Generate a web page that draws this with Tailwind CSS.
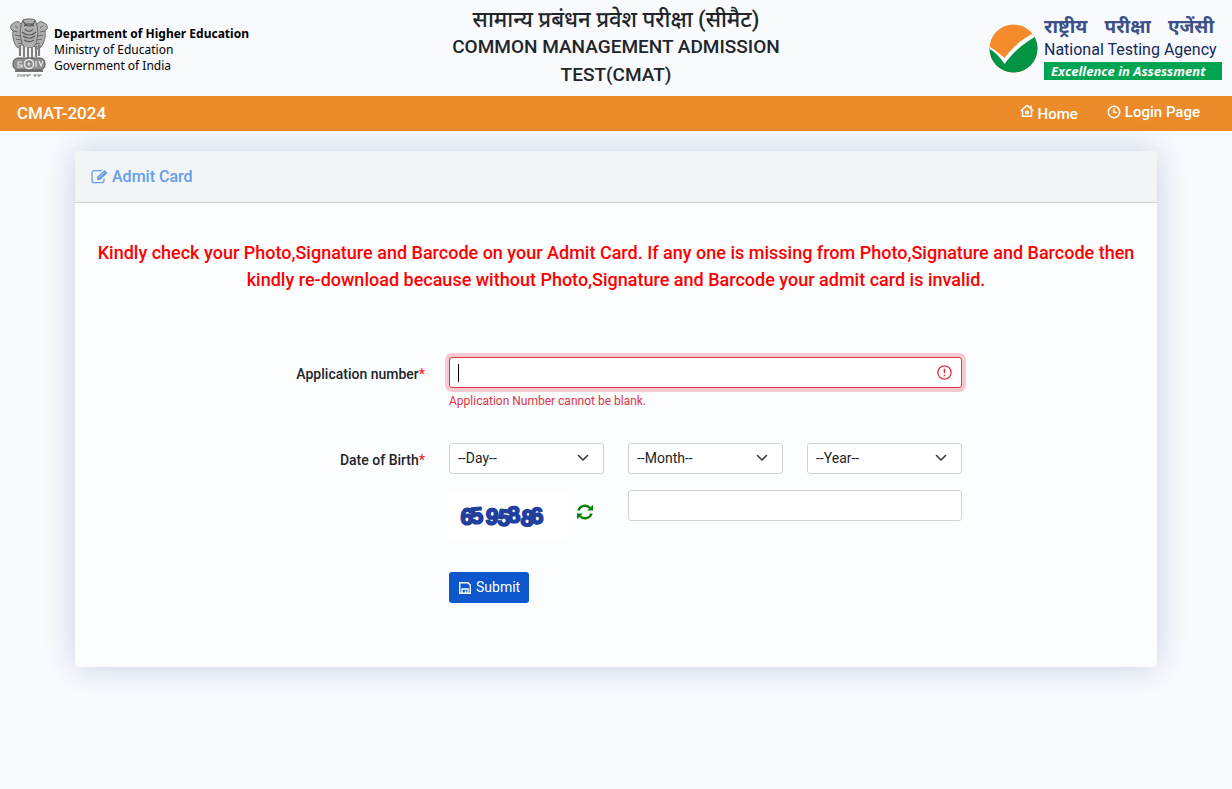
<!DOCTYPE html>
<html lang="en">

<head>
    <meta charset="UTF-8" />
    <meta name="viewport" content="width=device-width, initial-scale=1.0" />
    <title>CMAT-2024 | Admit Card</title>
    <script src="https://cdn.jsdelivr.net/npm/@tailwindcss/browser@4"></script>
</head>

<body class="min-h-screen bg-[#f8fafd] font-[Roboto,'Noto_Sans_Devanagari',sans-serif] text-[#212529]">

    <!-- Header -->
    <header class="flex justify-between items-center h-24 px-[10px]">
        <div class="flex flex-1 items-center gap-[6px] font-['Noto_Sans','Open_Sans',sans-serif] text-black">
            <svg class="w-[38px] h-[60px]" viewBox="0 0 38 60" fill="none" aria-label="State Emblem of India">
                <g fill="#b0b0b0" stroke="#6a6a6a" stroke-width="1">
                    <path d="M4 5c-3 1-4 4-3 6l2 2c-1 6 1 12 4 16l6 3 2-18-4-8C9 3 6 3 4 5z" />
                    <path d="M34 5c3 1 4 4 3 6l-2 2c1 6-1 12-4 16l-6 3-2-18 4-8c2-3 5-3 7-1z" />
                    <path d="M13 2l3-1h6l3 1 2 5 1 8-2 11-4 4h-6l-4-4-2-11 1-8z" />
                </g>
                <path d="M13 3l2 3h8l2-3M14 8c2-2 3-1 4 0h2c1-1 2-2 4 0M15 11c2 3 6 3 8 0M12 14c4 4 10 4 14 0M13 18c4 3 8 3 12 0M14 22c3 2 7 2 10 0" stroke="#555" stroke-width="1.2" />
                <path d="M5 8l3 2M3 13l5 1M5 17l5 1M6 21l5 1M8 25l4 1M33 8l-3 2M35 13l-5 1M33 17l-5 1M32 21l-5 1M30 25l-4 1" stroke="#666" />
                <path d="M10 27v11M14 28v11M18 29v11M22 29v11M26 28v11M29 27v11" stroke="#808080" stroke-width="2.2" />
                <path d="M12 28v11M16 29v11M20 30v10M24 29v11" stroke="#f4f4f4" stroke-width="1.8" />
                <rect x="3" y="40" width="32" height="12" rx="5" fill="#8f8f8f" stroke="#555" />
                <circle cx="19" cy="46" r="4.5" fill="#888" stroke="#e8e8e8" stroke-width="1.5" />
                <circle cx="19" cy="46" r="1.5" fill="#ddd" />
                <path d="M12 44H8v3h4v2H7M26 43v6M29 43l2 5 2-5" stroke="#e5e5e5" stroke-width="1.2" />
                <path d="M5 53h28" stroke="#555" stroke-width="1.6" />
                <path d="M7 57h14M23 57h9" stroke="#888" />
                <path d="M8 58v1M11 58v1M14 57v2M18 57v2M25 57v2M29 57v2" stroke="#777" />
            </svg>
            <div class="pt-1 text-[12px] leading-[16px]">
                <p class="font-bold">Department of Higher Education</p>
                <p>Ministry of Education</p>
                <p>Government of India</p>
            </div>
        </div>

        <h1 class="w-1/3 text-center text-[19px] leading-[28px] font-medium">
            <span class="block text-[22px] leading-[26px]">सामान्य प्रबंधन प्रवेश परीक्षा (सीमैट)</span>
            COMMON MANAGEMENT ADMISSION<br>TEST(CMAT)
        </h1>

        <div class="flex flex-1 justify-end items-center gap-[6px]">
            <svg class="w-[49px] h-[49px]" viewBox="0 0 49 49" aria-label="NTA">
                <clipPath id="disc"><circle cx="24.500" cy="24.500" r="24" /></clipPath>
                <g clip-path="url(#disc)">
                    <rect width="49" height="49" fill="#f68b2c" />
                    <path d="M0 24c6 3 11 8 15 14C23 26 33 16 49 9v40H0z" fill="#009444" />
                    <path d="M-1 22c6 3 12 8 16.500 12C23 24 32 15 47 8l2 3C35 19 25 27 15.500 40 11 33 6 28-1 24z" fill="#fff" />
                </g>
            </svg>
            <div class="w-[178px]">
                <p class="flex justify-between pr-2 text-[19px] leading-[20px] font-bold text-[#3d5088]">
                    <span>राष्ट्रीय</span> <span>परीक्षा</span> <span>एजेंसी</span>
                </p>
                <p class="font-[Roboto,sans-serif] text-[16px] leading-[25px] whitespace-nowrap text-[#14285c]">National Testing Agency</p>
                <p class="bg-[#00a551] pl-[7px] font-['Open_Sans',sans-serif] text-[13px] leading-[18px] font-bold italic whitespace-nowrap text-white">Excellence in Assessment</p>
            </div>
        </div>
    </header>

    <!-- Navbar -->
    <nav class="flex justify-between items-center h-[35px] bg-[#eb8b2a] pl-[17px] pr-8 text-white font-medium">
        <span class="text-[17px]">CMAT-2024</span>
        <div class="flex gap-[29px] pb-[2px] text-[15px] leading-[20px]">
            <a href="#" class="flex gap-1 pt-[2px]">
                <svg class="w-[14px] h-[14px]" viewBox="0 0 14 14" fill="none" stroke="currentColor" stroke-width="1.500">
                    <path d="M.5 7L7 1.500 13.500 7M2.500 6v6.300h9V6M5.700 7.500h2.600v2H5.700zM11 1.500v3" />
                </svg>
                Home
            </a>
            <a href="#" class="flex gap-1 pb-[2px]">
                <svg class="mt-[3px] w-[14px] h-[14px]" viewBox="0 0 14 14" fill="none" stroke="currentColor" stroke-width="1.600">
                    <circle cx="7" cy="7" r="5.700" />
                    <path d="M7 3.500V7.500h3" />
                </svg>
                Login Page
            </a>
        </div>
    </nav>

    <!-- Admit card form -->
    <main class="mx-[75px] mt-5 rounded bg-[#fcfdff] pb-16 shadow-[0_0_32px_rgba(8,40,130,0.2)]">
        <h2 class="flex items-center gap-1 h-[52px] rounded-t border-b border-[#d0d3d8] bg-[#f3f4f6] px-4 text-[16px] font-medium text-[#639fec]">
            <svg class="w-[17px] h-[16px]" viewBox="0 0 17 16" fill="none" stroke="currentColor">
                <path d="M11 1.700H3.200A2.200 2.200 0 0 0 1 3.900v7.600a2.200 2.200 0 0 0 2.200 2.200h7.600a2.200 2.200 0 0 0 2.200-2.200V9.500" stroke-width="1.300" />
                <path d="M6 8l7.500-7 3 3L9 11H6z" fill="currentColor" stroke="none" />
                <path d="M8 8.500l5-5" stroke="#f3f4f6" stroke-width=".7" />
            </svg>
            Admit Card
        </h2>

        <p class="px-4 pt-9 text-center text-[18px] leading-[27px] font-medium text-[#f00]">
            Kindly check your Photo,Signature and Barcode on your Admit Card. If any one is missing from Photo,Signature and Barcode then kindly re-download because without Photo,Signature and Barcode your admit card is invalid.
        </p>

        <form class="grid grid-cols-12 gap-x-6 px-4 pt-16 text-[14px] leading-[21px]" onsubmit="return false">
            <label for="appNo" class="col-span-4 pt-[7px] text-right font-medium">Application number<span class="text-[#f22]">*</span></label>
            <div class="col-span-6">
                <div class="relative">
                    <input id="appNo" type="text" class="block w-full h-[31px] rounded-[3px] border border-[#dc3545] bg-white px-2 ring-4 ring-[#dc3545]/25 outline-none" />
                    <span class="absolute left-[9px] top-[7px] w-px h-[18px] bg-black"></span>
                    <svg class="absolute right-[10px] top-2 w-[15px] h-[15px]" viewBox="0 0 15 15" fill="none" stroke="#dc3545" stroke-width="1.300">
                        <circle cx="7.500" cy="7.500" r="6.600" />
                        <path d="M7.500 3.800v4.500M7.500 9.800v1.500" stroke-width="1.600" />
                    </svg>
                </div>
                <p class="pt-1 text-[12px] leading-[18px] text-[#dc3545]">Application Number cannot be blank.</p>
            </div>

            <label for="day" class="col-span-4 col-start-1 mt-[33px] pt-[7px] text-right font-medium">Date of Birth<span class="text-[#f22]">*</span></label>
            <div class="relative col-span-2 mt-[33px]">
                <select id="day" class="block appearance-none w-full h-[31px] rounded-[3px] border border-[#ced4da] bg-white px-2">
                    <option>--Day--</option>
                </select>
                <svg class="pointer-events-none absolute right-[15px] top-[9px] w-3 h-3" viewBox="0 0 12 12" fill="none" stroke="#343a40" stroke-width="1.600" stroke-linecap="round" stroke-linejoin="round"><path d="M1.500 3.500L6 8l4.500-4.500" /></svg>
            </div>
            <div class="relative col-span-2 mt-[33px]">
                <select aria-label="Month" class="block appearance-none w-full h-[31px] rounded-[3px] border border-[#ced4da] bg-white px-2">
                    <option>--Month--</option>
                </select>
                <svg class="pointer-events-none absolute right-[15px] top-[9px] w-3 h-3" viewBox="0 0 12 12" fill="none" stroke="#343a40" stroke-width="1.600" stroke-linecap="round" stroke-linejoin="round"><path d="M1.500 3.500L6 8l4.500-4.500" /></svg>
            </div>
            <div class="relative col-span-2 mt-[33px]">
                <select aria-label="Year" class="block appearance-none w-full h-[31px] rounded-[3px] border border-[#ced4da] bg-white px-2">
                    <option>--Year--</option>
                </select>
                <svg class="pointer-events-none absolute right-[15px] top-[9px] w-3 h-3" viewBox="0 0 12 12" fill="none" stroke="#343a40" stroke-width="1.600" stroke-linecap="round" stroke-linejoin="round"><path d="M1.500 3.500L6 8l4.500-4.500" /></svg>
            </div>

            <!-- Captcha -->
            <div class="col-span-2 col-start-5 mt-4 flex gap-2">
                <svg class="w-[120px] h-[50px] bg-white" viewBox="0 0 120 50">
                    <text x="11 22 36 48 59 71 82" y="34 34 34 35 33 35 34" rotate="4 -5 5 6 -4 8 -3" fill="#203f9e" stroke="#203f9e" stroke-width="1.700" stroke-linejoin="round" font-family="Liberation Sans, sans-serif" font-weight="bold" font-size="23">6595886</text>
                </svg>
                <button type="button" aria-label="Refresh captcha" class="mt-[14px] w-4 h-4">
                    <svg class="w-4 h-4" viewBox="0 0 16 16" fill="none" stroke="#008000" stroke-width="2.400">
                        <path d="M1.500 6.500C3 1.500 9.500 0 13 4M14.500 9.500C13 14.500 6.500 16 3 12" />
                        <path d="M16 .8V6.500h-5.700zM0 15.200V9.500h5.700z" fill="#008000" stroke="none" />
                    </svg>
                </button>
            </div>
            <input type="text" aria-label="Captcha" class="col-span-4 mt-4 h-[31px] rounded-[3px] border border-[#ced4da] bg-white px-2" />

            <div class="col-span-6 col-start-5 mt-8">
                <button type="submit" class="flex items-center gap-1 h-[31px] rounded-[3px] bg-[#0b57cb] px-[9px] text-white">
                    <svg class="w-[14px] h-[14px]" viewBox="0 0 14 14" fill="none" stroke="currentColor" stroke-width="1.400">
                        <path d="M1.700 1.700h8.300l2.300 2.300v8.300H1.700zM4 12V8h6v4M7.500 9.500V12" />
                    </svg>
                    Submit
                </button>
            </div>
        </form>
    </main>

</body>

</html>
